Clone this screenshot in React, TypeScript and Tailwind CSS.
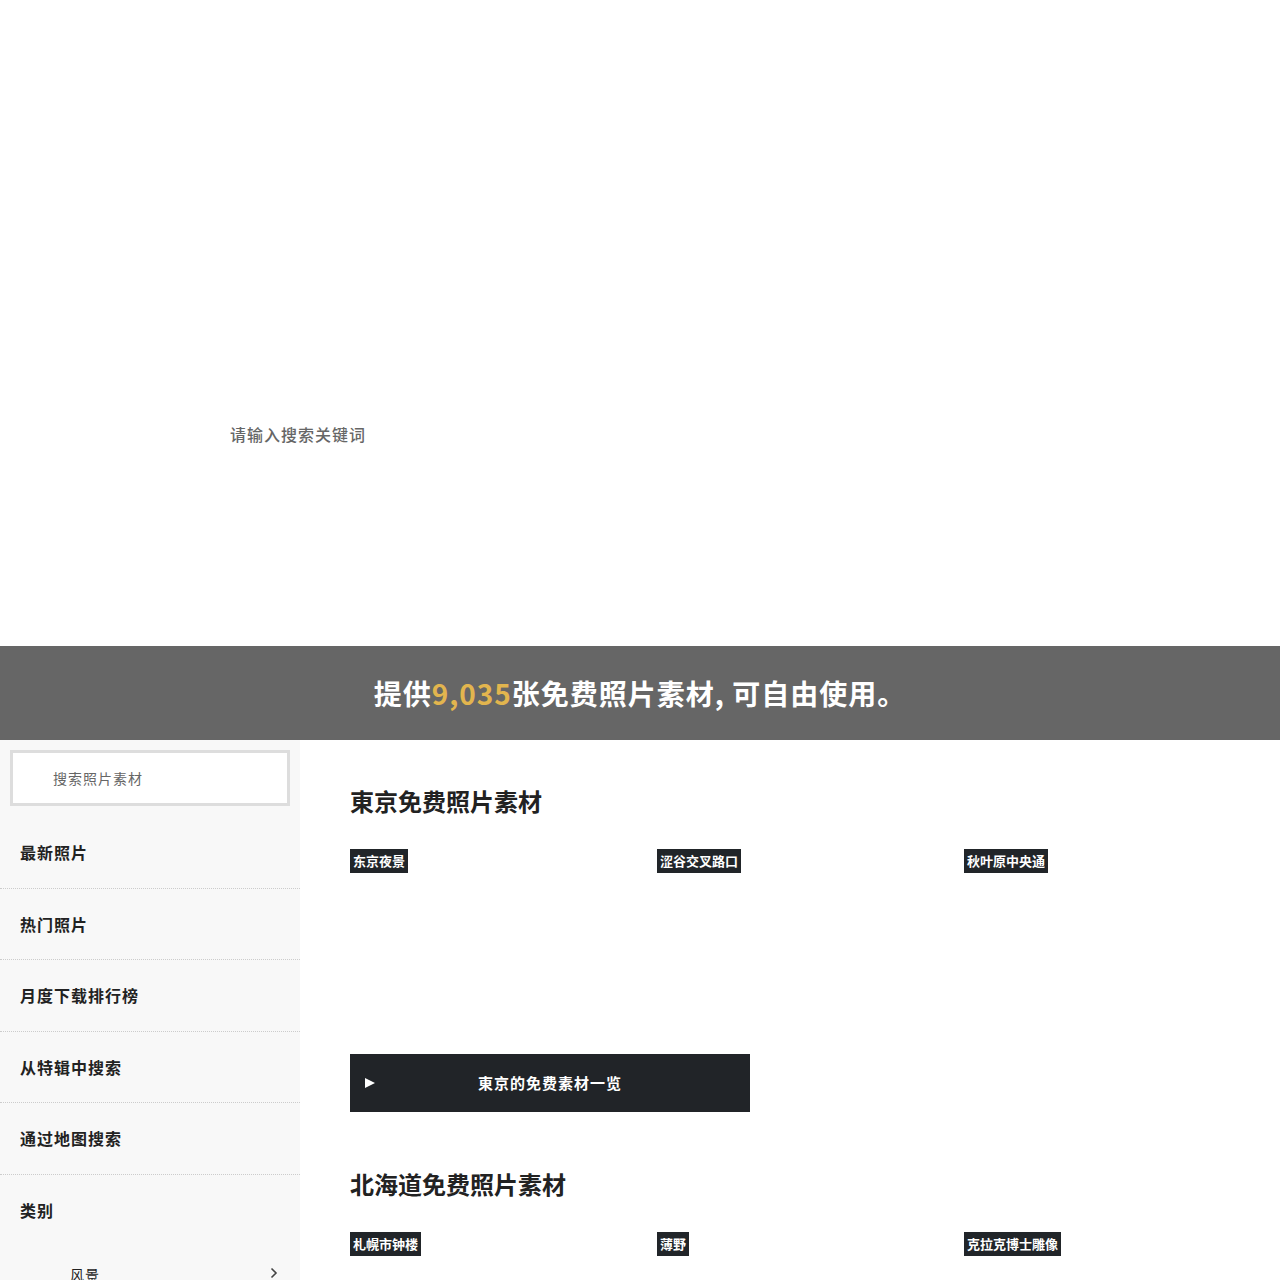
import React from "react";

const font = { fontFamily: '"Noto Sans CJK SC", "Noto Sans", sans-serif' };

type Photo = { title: string };

const menu = ["最新照片", "热门照片", "月度下载排行榜", "从特辑中搜索", "通过地图搜索"];

function PhotoCard({ photo }: { photo: Photo }) {
  return (
    <div className="h-[180px] bg-white">
      <span className="inline-block h-6 bg-[#212529] px-[3px] text-[13px] font-bold leading-6 text-white">
        {photo.title}
      </span>
    </div>
  );
}

function Section({ title, photos, more }: { title: string; photos: Photo[]; more?: string }) {
  return (
    <section>
      <h2 className="text-2xl font-bold leading-9 text-[#222]">{title}</h2>
      <div className="mt-7 grid w-[901px] grid-cols-3 gap-x-5">
        {photos.map((p) => (
          <PhotoCard key={p.title} photo={p} />
        ))}
      </div>
      {more && (
        <a className="relative mt-[27px] flex h-[58px] w-[400px] items-center justify-center bg-[#212428] text-[15px] font-bold tracking-[1px] text-white">
          <span className="absolute left-[15px] top-1/2 -translate-y-1/2 border-y-[5px] border-l-[10px] border-y-transparent border-l-white" />
          {more}
        </a>
      )}
    </section>
  );
}

export default function App() {
  return (
    <div className="min-h-[1280px] bg-white" style={font}>
      {/* hero with keyword search */}
      <header className="relative h-[646px] bg-white">
        <div className="absolute left-[230px] top-[422px] text-base font-medium leading-6 tracking-[1px] text-[#666]">
          请输入搜索关键词
        </div>
      </header>

      {/* stock counter band */}
      <div className="flex h-[94px] items-center justify-center bg-[#666] text-[28px] font-bold tracking-[1px] text-white">
        <p>
          提供<span className="text-[#e2b54e]">9,035</span>张免费照片素材, 可自由使用。
        </p>
      </div>

      <div className="flex">
        <aside className="w-[300px] shrink-0 bg-[#f8f8f8]">
          <div className="px-[10px] pb-[11px] pt-[10px]">
            <div className="flex h-14 items-center border-[3px] border-[#ddd] bg-white pl-10 text-sm tracking-[1px] text-[#666]">
              搜索照片素材
            </div>
          </div>
          <ul>
            {menu.map((m) => (
              <li
                key={m}
                className="flex h-[71.5px] items-center border-b border-dotted border-[#ccc] pl-5 text-base font-bold tracking-[1px] text-[#222]"
              >
                {m}
              </li>
            ))}
            <li className="flex h-[71px] items-center pl-5 text-base font-bold tracking-[1px] text-[#222]">类别</li>
            <li className="flex h-[54px] items-center justify-between pl-[70px] pr-[22px] text-sm tracking-[1px] text-[#222]">
              <span className="pt-[2px]">风景</span>
              <svg width="8" height="12" viewBox="0 0 8 12" fill="none" stroke="#444" strokeWidth="1.6">
                <path d="M1.5 1.5 6 6l-4.5 4.5" />
              </svg>
            </li>
          </ul>
        </aside>

        <main className="flex-1 pl-[50px] pt-[43px]">
          <Section
            title="東京免费照片素材"
            photos={[{ title: "东京夜景" }, { title: "涩谷交叉路口" }, { title: "秋叶原中央通" }]}
            more="東京的免费素材一览"
          />
          <div className="h-[54px]" />
          <Section
            title="北海道免费照片素材"
            photos={[{ title: "札幌市钟楼" }, { title: "薄野" }, { title: "克拉克博士雕像" }]}
          />
        </main>
      </div>
    </div>
  );
}
